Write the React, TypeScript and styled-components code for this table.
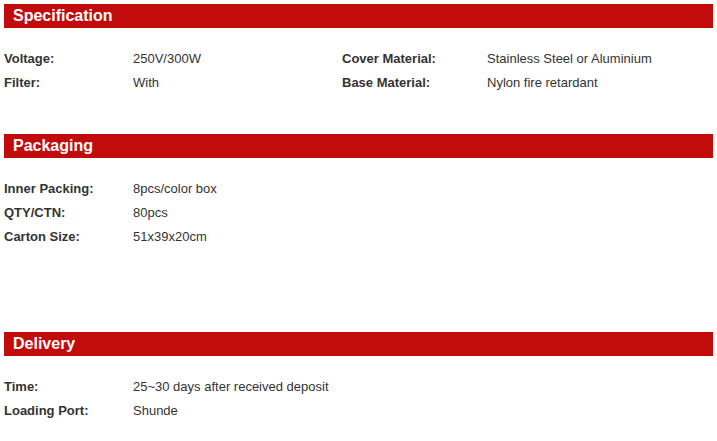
import React from 'react';
import styled, { createGlobalStyle } from 'styled-components';

const GlobalStyle = createGlobalStyle`
  html, body {
    margin: 0;
    padding: 0;
    background: #ffffff;
  }
  body {
    padding: 4px;
    font-family: "Liberation Sans", Arial, sans-serif;
    font-size: 13px;
    color: #333333;
  }
`;

const Page = styled.div`
  display: flex;
  flex-direction: column;
`;

const Section = styled.section<{ $gap: number }>`
  margin-bottom: ${(p) => p.$gap}px;
`;

const Bar = styled.h2`
  margin: 0;
  height: 24px;
  line-height: 24px;
  padding: 0 9px;
  background: #c20c0c;
  color: #ffffff;
  font-size: 16px;
  font-weight: 700;
`;

const Table = styled.div`
  display: grid;
  grid-template-columns: 129px 209px 145px 1fr;
  grid-auto-rows: 24px;
  align-items: center;
  padding-top: 19px;
  line-height: 24px;
`;

const Label = styled.span`
  font-weight: 700;
  color: #333333;
`;

const Value = styled.span`
  color: #333333;
`;

type Row = [string, string, string?, string?];

const sections: { title: string; gap: number; rows: Row[] }[] = [
  {
    title: 'Specification',
    gap: 39,
    rows: [
      ['Voltage:', '250V/300W', 'Cover Material:', 'Stainless Steel or Aluminium'],
      ['Filter:', 'With', 'Base Material:', 'Nylon fire retardant'],
    ],
  },
  {
    title: 'Packaging',
    gap: 83,
    rows: [
      ['Inner Packing:', '8pcs/color box'],
      ['QTY/CTN:', '80pcs'],
      ['Carton Size:', '51x39x20cm'],
    ],
  },
  {
    title: 'Delivery',
    gap: 0,
    rows: [
      ['Time:', '25~30 days after received deposit'],
      ['Loading Port:', 'Shunde'],
    ],
  },
];

const App: React.FC = () => {
  return (
    <Page>
      <GlobalStyle />
      {sections.map((s) => (
        <Section key={s.title} $gap={s.gap}>
          <Bar>{s.title}</Bar>
          <Table>
            {s.rows.map((r) => (
              <React.Fragment key={r[0]}>
                <Label>{r[0]}</Label>
                <Value>{r[1]}</Value>
                <Label>{r[2] ?? ''}</Label>
                <Value>{r[3] ?? ''}</Value>
              </React.Fragment>
            ))}
          </Table>
        </Section>
      ))}
    </Page>
  );
};

export default App;
